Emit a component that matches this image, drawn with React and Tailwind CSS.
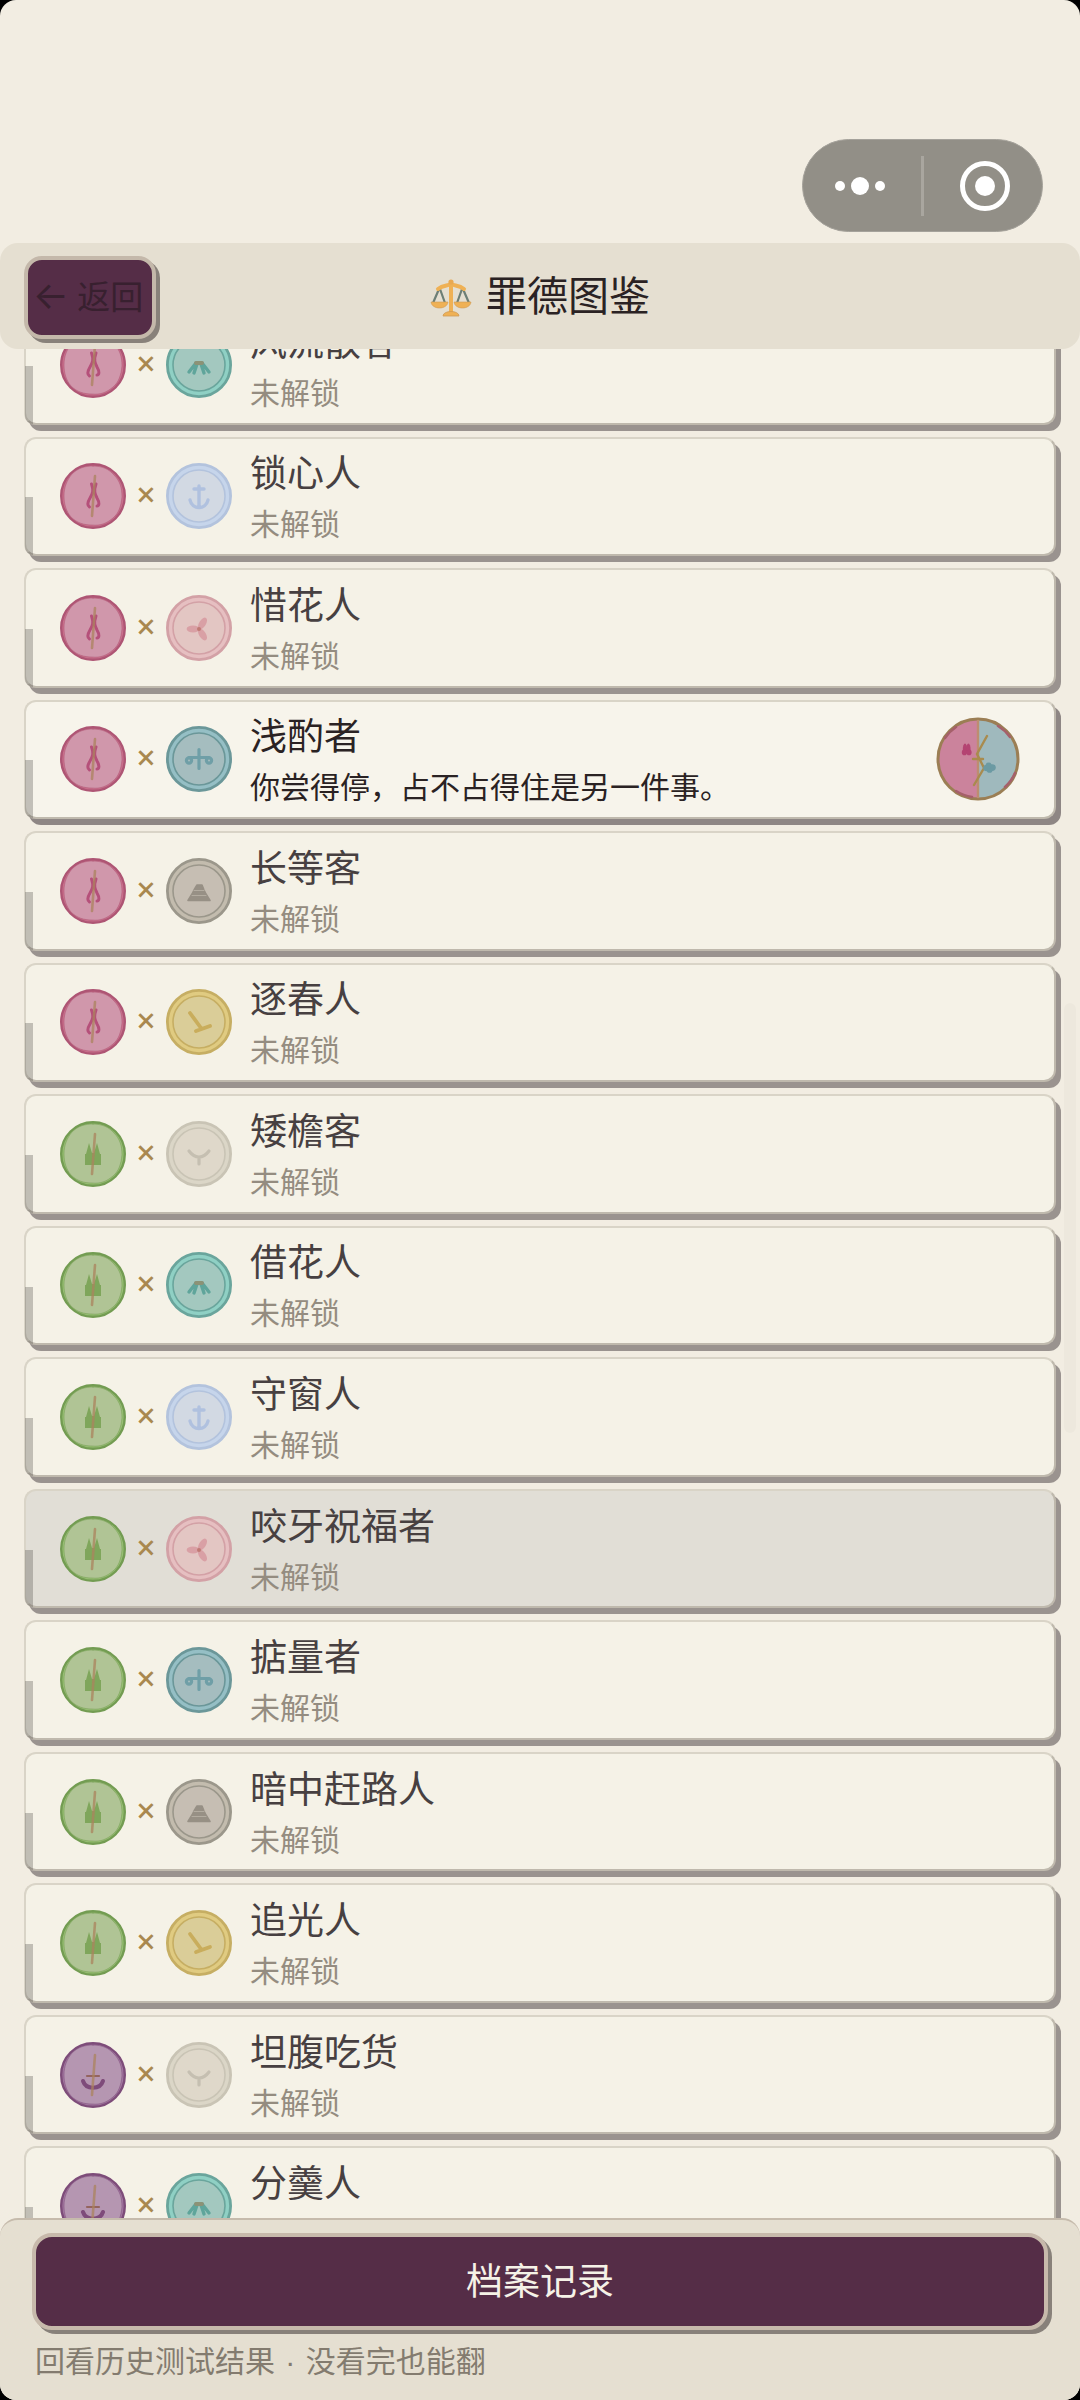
import clsx from 'clsx';

const SINS = {
  rose: { edge: '#ae5574', fill: '#d097ab', rim: '#c9708c' },
  leaf: { edge: '#739c52', fill: '#b0c495', rim: '#98bf74' },
  plum: { edge: '#7d4c79', fill: '#b596b1', rim: '#a277a0' },
};

const VIRTUES = {
  bone: { edge: '#c9c4b5', fill: '#dfd8ca', rim: '#dbd6c7', mark: '#c5bfb1' },
  teal: { edge: '#6aa59c', fill: '#a3c8bf', rim: '#8fd0c4', mark: '#5fa59b' },
  blue: { edge: '#b3c3dd', fill: '#d2d9e3', rim: '#c6d5eb', mark: '#b0c1df' },
  pink: { edge: '#d3a1a6', fill: '#e3c6c3', rim: '#e6bfc1', mark: '#d9a0a5' },
  lake: { edge: '#6b9799', fill: '#a5bdbf', rim: '#95bfc5', mark: '#6f9fa7' },
  stone: { edge: '#9b978b', fill: '#c6beb3', rim: '#c3bcae', mark: '#979085' },
  gold: { edge: '#c6ae63', fill: '#dacd98', rim: '#e0cb81', mark: '#c9ad5c' },
};

const ENTRIES = [
  { name: '风流散客', sin: 'rose', virtue: 'teal' },
  { name: '锁心人', sin: 'rose', virtue: 'blue' },
  { name: '惜花人', sin: 'rose', virtue: 'pink' },
  { name: '浅酌者', sin: 'rose', virtue: 'lake', text: '你尝得停，占不占得住是另一件事。' },
  { name: '长等客', sin: 'rose', virtue: 'stone' },
  { name: '逐春人', sin: 'rose', virtue: 'gold' },
  { name: '矮檐客', sin: 'leaf', virtue: 'bone' },
  { name: '借花人', sin: 'leaf', virtue: 'teal' },
  { name: '守窗人', sin: 'leaf', virtue: 'blue' },
  { name: '咬牙祝福者', sin: 'leaf', virtue: 'pink', pressed: true },
  { name: '掂量者', sin: 'leaf', virtue: 'lake' },
  { name: '暗中赶路人', sin: 'leaf', virtue: 'stone' },
  { name: '追光人', sin: 'leaf', virtue: 'gold' },
  { name: '坦腹吃货', sin: 'plum', virtue: 'bone' },
  { name: '分羹人', sin: 'plum', virtue: 'teal' },
];

/* Coins are drawn on a 66 x 66 canvas */
function SinCoin({ kind }) {
  const c = SINS[kind];
  return (
    <svg viewBox="0 0 66 66" className="size-[66px] shrink-0" fill="none" strokeLinecap="round" strokeLinejoin="round">
      <circle cx="33" cy="33" r="31.8" fill={c.rim} stroke={c.edge} strokeWidth="2.4" />
      <path
        d="M33 3 C42 3 49 6 54 12 C60 18 62 25 62 34 C61 43 59 50 53 55 C47 60 41 63 32 62 C24 62 17 60 11 54 C6 48 4 41 4 33 C4 24 7 17 12 11 C18 5 25 3 33 3Z"
        fill={c.fill}
        stroke={c.edge}
        strokeOpacity="0.5"
        strokeWidth="1"
      />
      {kind === 'rose' && (
        <path
          d="M31.5 21 C34 28 32.5 31 30 35 C27 40 28 43 29.5 44 M36 21 C33.5 28 35 31 37 35 C40 40 39 43 37 43"
          stroke="#b5507a"
          strokeWidth="3"
        />
      )}
      {kind === 'leaf' && <path d="M25 44 V33 L26 33 L29 22 L32 32 H34 L37 22 L40 33 L41 33 V44Z" fill="#7fa65b" />}
      {kind === 'plum' && <path d="M23 39 C26 48 40 48 43 39" stroke="#7e4b7a" strokeWidth="4" />}
      {kind === 'plum' && <path d="M27 34 H39" stroke="#94645f" strokeWidth="2.2" />}
      <path d="M35 13 L32 53" stroke="#ab835d" strokeOpacity="0.75" strokeWidth="2.6" />
    </svg>
  );
}

function VirtueMark({ kind, color }) {
  switch (kind) {
    case 'bone':
      return <path d="M23 30 C29 38 37 38 43 30 M33 36 V43" stroke={color} strokeWidth="3.2" />;
    case 'teal':
      return (
        <>
          <path d="M30 31 L23 40 M31 32 L28 41 M36 31 L43 40 M35 32 L38 41" stroke={color} strokeWidth="3.4" />
          <path d="M30 31 H36" stroke="#8c9276" strokeWidth="4" />
        </>
      );
    case 'blue':
      return <path d="M33 23 V44 M28 26 H38 M24 37 C26 47 40 47 42 37" stroke={color} strokeWidth="3.4" />;
    case 'pink':
      return (
        <>
          <g fill={color}>
            <ellipse cx="27" cy="34" rx="6.4" ry="3.4" />
            <ellipse cx="36.5" cy="28.5" rx="6.6" ry="3.4" transform="rotate(-58 36.5 28.5)" />
            <ellipse cx="36.5" cy="39.5" rx="6.6" ry="3.4" transform="rotate(58 36.5 39.5)" />
          </g>
          <circle cx="33" cy="34" r="2" fill="#c07a74" />
        </>
      );
    case 'lake':
      return (
        <>
          <path d="M33 23.5 V42.5 M23 31.5 H43" stroke={color} strokeWidth="3.2" />
          <circle cx="23" cy="34.5" r="2.6" stroke={color} strokeWidth="3.2" />
          <circle cx="43" cy="34.5" r="2.6" stroke={color} strokeWidth="3.2" />
        </>
      );
    case 'stone':
      return (
        <>
          <path d="M31 27 H36 L38 32 L40 36 L44 42.5 H22 L26 36 L28 32Z" fill={color} stroke={color} strokeWidth="1.6" />
          <path d="M28 32.5 H38 M26 37.5 H40" stroke="#b3aca0" strokeWidth="1" />
        </>
      );
    default:
      return <path d="M24 24 L35 39 M30 42 L44 37" stroke={color} strokeWidth="3.8" />;
  }
}

function VirtueCoin({ kind }) {
  const c = VIRTUES[kind];
  return (
    <svg viewBox="0 0 66 66" className="size-[66px] shrink-0" fill="none" strokeLinecap="round" strokeLinejoin="round">
      <circle cx="33" cy="33" r="31.6" fill={c.rim} stroke={c.edge} strokeWidth="2.8" />
      <circle cx="33" cy="33" r="26" fill={c.fill} stroke={c.edge} strokeWidth="1.6" />
      <VirtueMark kind={kind} color={c.mark} />
    </svg>
  );
}

function Medal() {
  return (
    <svg viewBox="0 0 84 84" className="size-21 shrink-0" fill="none" strokeLinecap="round">
      <path d="M42 2 A40 40 0 0 0 42 82Z" fill="#cb839c" />
      <path d="M42 2 A40 40 0 0 1 42 82Z" fill="#9fb9bd" />
      <circle cx="42" cy="42" r="40" stroke="#9b7e54" strokeWidth="3" />
      <path
        d="M9 21 A39 39 0 0 1 20 10 M62 9 A39 39 0 0 1 74 20 M79 56 A39 39 0 0 1 69 70 M36 80 A39 39 0 0 1 20 74"
        stroke="#a5606a"
        strokeWidth="2.6"
      />
      <path d="M42 4 V80" stroke="#bd8d70" strokeWidth="2.4" />
      <path d="M51 19 L41 37 L48 51 L38 68 M37 42 H47" stroke="#a98b4e" strokeWidth="2.4" />
      <g fill="#b44472">
        <ellipse cx="29" cy="32" rx="2.2" ry="5.4" />
        <ellipse cx="32.4" cy="32" rx="2.2" ry="5.4" />
        <ellipse cx="28.4" cy="35.4" rx="2.6" ry="2.8" />
        <ellipse cx="33" cy="35.4" rx="2.6" ry="2.8" />
      </g>
      <g fill="#6b9aa3">
        <ellipse cx="51" cy="51" rx="3.8" ry="3.2" />
        <ellipse cx="56" cy="50.6" rx="3.8" ry="3.4" />
        <ellipse cx="52.6" cy="48.6" rx="3" ry="3" />
        <ellipse cx="53.6" cy="53.4" rx="2.8" ry="2.4" />
      </g>
    </svg>
  );
}

function ScalesIcon() {
  return (
    <svg viewBox="0 0 42 40" className="h-10 w-[42px] shrink-0" fill="none">
      <path d="M9 11 L3 25 M10 11 L15 25 M32 11 L27 25 M33 11 L39 25" stroke="#6d7f76" strokeWidth="2.2" />
      <path d="M8 11 C13 7 17 8 21 6 C25 8 29 7 34 11" stroke="#efb155" strokeWidth="4" strokeLinecap="round" />
      <path d="M21 4 V34" stroke="#efb155" strokeWidth="4" />
      <circle cx="21" cy="4" r="2.6" fill="#e9a951" />
      <path d="M1 24 H18 C17 32 2 32 1 24Z M24 24 H41 C40 32 25 32 24 24Z" fill="#efb155" stroke="#cf9a55" strokeWidth="0.6" />
      <path d="M13 38 C13 32 29 32 29 38Z" fill="#efb155" stroke="#cf9a55" strokeWidth="0.8" />
    </svg>
  );
}

function EntryCard({ entry }) {
  const { name, sin, virtue, text, pressed } = entry;
  return (
    <li
      className={clsx(
        'relative flex items-center rounded-xl border-2 border-[#d9d4c7] border-r-[#bfb9ad] border-b-[#bfb9ad] px-[34px]',
        text ? 'bg-[#f7f4eb] shadow-[5px_6px_0_#8e8684]' : 'shadow-[5px_6px_0_#9a938f]',
        !text && (pressed ? 'bg-[#e1ded6]' : 'bg-[#f5f2e7]')
      )}
    >
      <span className="absolute -bottom-px -left-px h-1/2 w-2 rounded-bl-xl bg-[#4a4541]/30" />
      <SinCoin kind={sin} />
      <span className="w-10 pb-1 text-center font-['Noto_Sans'] text-[34px] leading-10 font-medium text-[#a9884f]">×</span>
      <VirtueCoin kind={virtue} />
      <div className="ml-[18px] min-w-0 flex-1 pb-1">
        <h2 className={clsx('text-[37px] leading-[52px]', text ? 'text-[#2a2223]' : 'text-[#474041]')}>{name}</h2>
        <p className={clsx('mt-1 text-[30px] leading-[42px]', text ? 'text-[#2a2223]' : 'text-[#948c80]')}>
          {text || '未解锁'}
        </p>
      </div>
      {text && <Medal />}
    </li>
  );
}

function Capsule() {
  return (
    <div className="flex h-[93px] w-[241px] items-center rounded-full border border-[#a5a29b] bg-[#928f87]">
      <button type="button" aria-label="更多" className="flex flex-1 items-center justify-center gap-[6px] pr-1">
        <span className="size-[10px] rounded-full bg-white" />
        <span className="size-[18px] rounded-full bg-white" />
        <span className="size-[10px] rounded-full bg-white" />
      </button>
      <span className="h-15 w-[3px] bg-[#a9a69f]" />
      <button type="button" aria-label="关闭" className="flex flex-1 items-center justify-center pl-1">
        <span className="flex size-[50px] items-center justify-center rounded-full border-5 border-white">
          <span className="size-5 rounded-full bg-white" />
        </span>
      </button>
    </div>
  );
}

export default function App() {
  return (
    <div className="bg-black font-['Noto_Sans_CJK_SC','Noto_Sans',sans-serif]">
      <div className="flex h-screen flex-col overflow-hidden rounded-2xl bg-[#f2ede2]">
        {/* Status area */}
        <div className="flex shrink-0 justify-end pt-[139px] pr-[37px] pb-[11px]">
          <Capsule />
        </div>

        {/* Header */}
        <header className="grid shrink-0 grid-cols-[1fr_auto_1fr] items-center rounded-[18px] bg-[#e5dfd1] px-6 pt-[13px] pb-[10px]">
          <button
            type="button"
            className="flex h-[83px] w-[132px] items-center justify-center gap-2 justify-self-start rounded-[18px] border-4 border-[#c4b8aa] bg-[#552d47] pr-1 pb-1 text-[33px] whitespace-nowrap text-[#38202f] shadow-[4px_4px_0_#88817a]"
          >
            <span className="font-['Inter'] text-[38px]">←</span>
            返回
          </button>
          <h1 className="flex items-center gap-[14px] text-[41px] leading-[60px] text-[#2a2223]">
            <ScalesIcon />
            <span className="pb-[10px]">罪德图鉴</span>
          </h1>
        </header>

        {/* Entries, scrolled part of the way down */}
        <main className="relative flex min-h-0 flex-1 flex-col overflow-hidden px-6">
          <ul className="-mt-11 -mb-12 grid flex-1 auto-rows-fr gap-3">
            {ENTRIES.map((entry) => (
              <EntryCard key={entry.name} entry={entry} />
            ))}
          </ul>
          <span className="absolute top-[35%] right-1 h-[23%] w-3 rounded-full bg-black/2" />
        </main>

        {/* Footer */}
        <footer className="shrink-0 rounded-t-[18px] border-t-2 border-[#c6bbac] bg-[#e5dfd1] px-8 pt-[13px] pb-[18px]">
          <button
            type="button"
            className="h-[97px] w-full rounded-[20px] border-4 border-[#c7b9ab] bg-[#552d47] pb-1 text-[37px] text-[#f5f2e7] shadow-[4px_4px_0_#88817a]"
          >
            档案记录
          </button>
          <p className="mt-[6px] pl-[3px] text-[30px] leading-[46px] text-[#837b6f]">
            回看历史测试结果
            <span className="mx-[2px] font-['Liberation_Sans'] leading-none whitespace-pre"> · </span>
            没看完也能翻
          </p>
        </footer>
      </div>
    </div>
  );
}
